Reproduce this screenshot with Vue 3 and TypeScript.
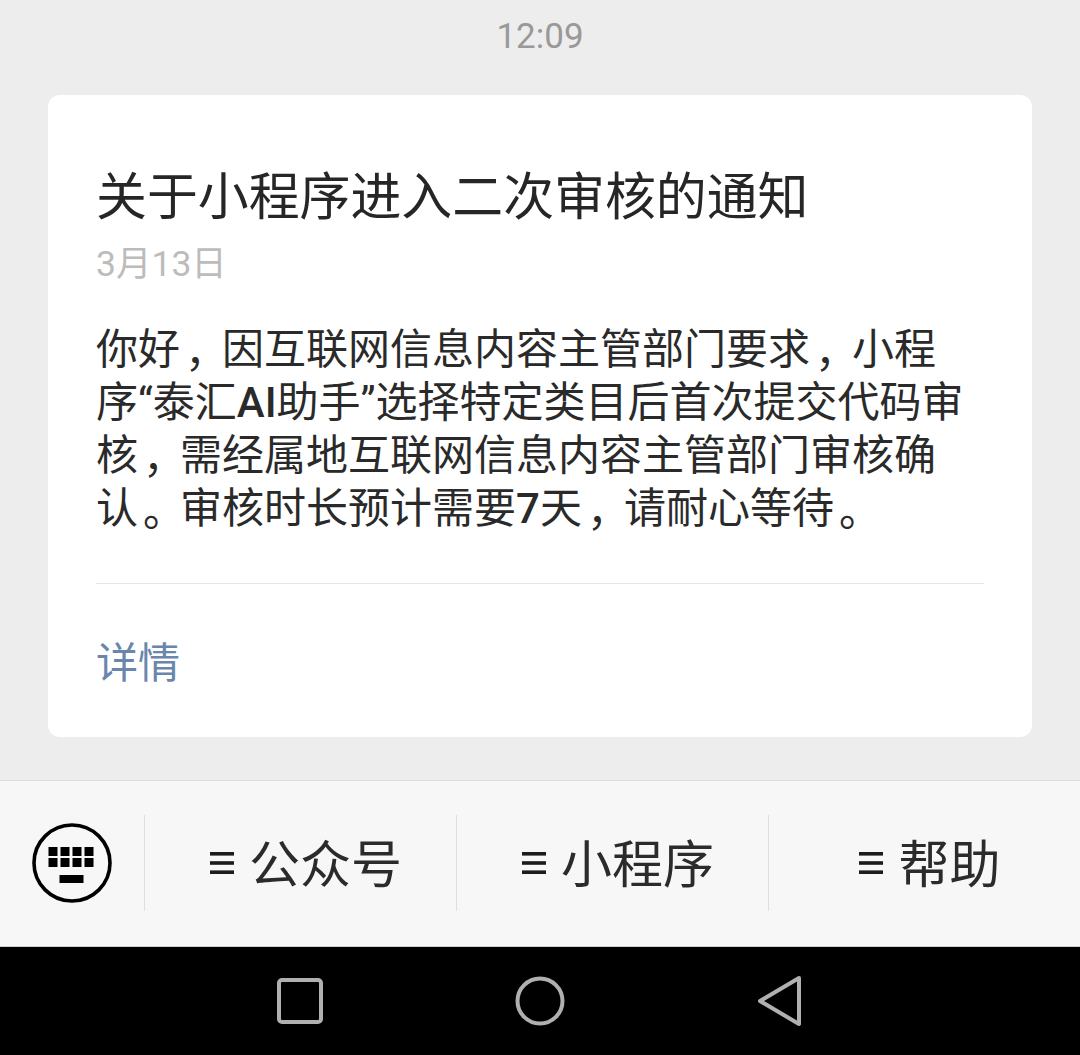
<script setup lang="ts">
interface Seg { text: string; cls: string }

const rawLines: string[] = [
  '你好，因互联网信息内容主管部门要求，小程',
  '序“泰汇AI助手”选择特定类目后首次提交代码审',
  '核，需经属地互联网信息内容主管部门审核确',
  '认。审核时长预计需要7天，请耐心等待。',
]

function classify(text: string): string {
  if (text === '，' || text === '。') return 'punct'
  if (text === 'AI' || text === '7') return 'latin'
  return ''
}

const lines: Seg[][] = rawLines.map((l) =>
  l
    .split(/([，。]|AI|7)/)
    .filter((t) => t.length > 0)
    .map((t) => ({ text: t, cls: classify(t) })),
)

const menus: { label: string }[] = [{ label: '公众号' }, { label: '小程序' }, { label: '帮助' }]
</script>

<template>
  <div class="page">
    <main class="chat">
      <div class="time">12:09</div>
      <article class="card">
        <h1 class="title">关于小程序进入二次审核的通知</h1>
        <div class="date">3月13日</div>
        <div class="body">
          <div v-for="(line, i) in lines" :key="i" class="line">
            <span v-for="(seg, j) in line" :key="j" :class="seg.cls">{{ seg.text }}</span>
          </div>
        </div>
        <div class="rule"></div>
        <div class="detail">详情</div>
      </article>
    </main>
    <section class="bar">
      <div class="kbd">
        <svg width="82" height="82" viewBox="0 0 82 82">
          <circle cx="41" cy="41" r="38" fill="none" stroke="#000" stroke-width="3.6" />
          <g fill="#000">
            <rect x="17.5" y="25" width="9" height="9" />
            <rect x="29.5" y="25" width="9" height="9" />
            <rect x="41.5" y="25" width="9" height="9" />
            <rect x="53.5" y="25" width="9" height="9" />
            <rect x="17.5" y="36" width="9" height="9" />
            <rect x="29.5" y="36" width="9" height="9" />
            <rect x="41.5" y="36" width="9" height="9" />
            <rect x="53.5" y="36" width="9" height="9" />
            <rect x="28.5" y="53" width="24" height="8" />
          </g>
        </svg>
      </div>
      <div v-for="m in menus" :key="m.label" class="menu">
        <svg class="burger" width="24" height="22" viewBox="0 0 24 22">
          <g fill="#1c1c1c">
            <rect x="0" y="0" width="24" height="3.6" />
            <rect x="0" y="9.2" width="24" height="3.6" />
            <rect x="0" y="18.4" width="24" height="3.6" />
          </g>
        </svg>
        <span class="menu-label">{{ m.label }}</span>
      </div>
    </section>
    <nav class="nav">
      <svg width="46" height="46" viewBox="0 0 46 46">
        <rect x="2" y="2" width="42" height="42" rx="3" fill="none" stroke="#b0b0b0" stroke-width="4" />
      </svg>
      <svg width="50" height="50" viewBox="0 0 50 50">
        <circle cx="25" cy="25" r="22.5" fill="none" stroke="#b0b0b0" stroke-width="4" />
      </svg>
      <svg width="46" height="52" viewBox="0 0 46 52">
        <path d="M42 3 L3 26 L42 49 Z" fill="none" stroke="#b0b0b0" stroke-width="4" stroke-linejoin="round" />
      </svg>
    </nav>
  </div>
</template>

<style>
html, body { margin: 0; background: #ededed; }
</style>

<style scoped>
.page {
  width: 1080px;
  height: 1055px;
  display: flex;
  flex-direction: column;
  overflow: hidden;
  background: #ededed;
  font-family: Roboto, "Noto Sans CJK SC", sans-serif;
}
.chat {
  height: 780px;
  padding: 0 48px;
  box-sizing: border-box;
  display: flex;
  flex-direction: column;
}
.time {
  height: 95px;
  padding-top: 16px;
  box-sizing: border-box;
  line-height: 42px;
  text-align: center;
  font-size: 35px;
  color: #999;
}
.card {
  height: 642px;
  box-sizing: border-box;
  background: #fff;
  border-radius: 12px;
  padding: 70px 48px 0;
}
.title {
  margin: 0;
  font-size: 50.9px;
  font-weight: 400;
  line-height: 66px;
  color: #262626;
  white-space: nowrap;
}
.date {
  margin-top: 12px;
  font-size: 35.5px;
  line-height: 42px;
  color: #bcbcbc;
}
.body {
  margin-top: 38px;
  font-size: 42px;
  line-height: 53px;
  color: #2a2a2a;
}
.line {
  height: 53px;
  white-space: nowrap;
}
.punct {
  display: inline-block;
  width: 42px;
  text-indent: 5px;
  letter-spacing: -5px;
  vertical-align: -3px;
}
.latin { font-weight: 500; }
.rule {
  margin-top: 48px;
  height: 1px;
  background: #e6e6e6;
}
.detail {
  margin-top: 52px;
  font-size: 42px;
  line-height: 56px;
  color: #6a86ac;
}
.bar {
  height: 167px;
  box-sizing: border-box;
  border-top: 1px solid #dedede;
  border-bottom: 1px solid #d0d0d0;
  padding-bottom: 1px;
  background: #f7f7f7;
  display: grid;
  grid-template-columns: 144px 312px 312px 312px;
  align-items: center;
}
.kbd {
  display: flex;
  justify-content: center;
}
.menu {
  height: 96px;
  display: flex;
  align-items: center;
  justify-content: center;
  gap: 15px;
  padding-left: 11px;
  box-sizing: border-box;
  border-left: 1px solid #dfdfdf;
  color: #2b2b2b;
}
.menu-label {
  font-size: 51px;
  line-height: 60px;
  padding-top: 6px;
  white-space: nowrap;
}
.burger { flex: none; }
.nav {
  flex: 1;
  background: #000;
  display: grid;
  grid-template-columns: 240px 240px 240px;
  justify-items: center;
  align-items: center;
  padding-left: 180px;
  box-sizing: border-box;
}
</style>
